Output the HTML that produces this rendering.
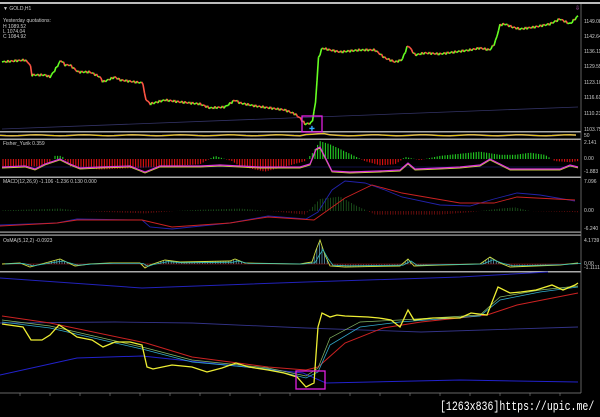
<!DOCTYPE html><html><head><meta charset="utf-8"><style>
html,body{margin:0;padding:0;background:#000;width:600px;height:417px;overflow:hidden}
svg{display:block}
text{font-family:"Liberation Sans",sans-serif;font-size:5px;fill:#ccc}
</style></head><body>
<svg id="s" width="600" height="417" viewBox="0 0 600 417">
<rect width="600" height="417" fill="#000"/>
<rect x="0" y="2" width="600" height="2" fill="#bbb"/>
<g fill="#aaa">
<rect x="0" y="131" width="581" height="1.5"/>
<rect x="0" y="138.5" width="581" height="1.5"/>
<rect x="0" y="176.5" width="581" height="1.5"/>
<rect x="0" y="231.5" width="581" height="1.2"/>
<rect x="0" y="234.5" width="581" height="1.2"/>
<rect x="0" y="271" width="581" height="1.5"/>
</g>
<line x1="581" y1="4" x2="581" y2="393" stroke="#888" stroke-width="0.7"/>
<line x1="0" y1="393" x2="581" y2="393" stroke="#888" stroke-width="0.7"/>
<g id="g"></g>
<text x="3" y="10">▼ GOLD,H1</text>
<text x="3" y="22">Yesterday quotations:</text>
<text x="3" y="28">H 1089.52</text>
<text x="3" y="33">L 1074.04</text>
<text x="3" y="38">C 1084.92</text>
<text x="3" y="145">Fisher_Yurik 0.359</text>
<text x="3" y="183">MACD(12,26,9) -1.106 -1.236 0.130 0.000</text>
<text x="3" y="242">OsMA(5,12,2) -0.0923</text>
<g font-size="4.5">
<text x="584" y="23">1149.08</text><text x="584" y="38">1142.64</text><text x="584" y="53">1136.11</text><text x="584" y="68">1129.55</text><text x="584" y="84">1123.10</text><text x="584" y="99">1116.61</text><text x="584" y="115">1110.23</text><text x="584" y="131">1103.75</text>
<text x="584" y="137">50</text>
<text x="584" y="144">2.141</text><text x="584" y="160">0.00</text><text x="584" y="173">-1.883</text>
<text x="584" y="183">7.096</text><text x="584" y="212">0.00</text><text x="584" y="230">-6.240</text>
<text x="584" y="242">4.1739</text><text x="584" y="265">0.00</text><text x="584" y="269">-1.1111</text>
</g>
<rect x="302" y="116" width="20" height="16" fill="none" stroke="#e020e0" stroke-width="1.3"/>
<rect x="296" y="371" width="29" height="18" fill="none" stroke="#e020e0" stroke-width="1.3"/>
<text x="309" y="131" style="fill:#3af;font-size:7px">✚</text>
<text x="575" y="10" style="fill:#c6c;font-size:6px">⇩</text>
<text x="440" y="410" transform="translate(440 410) scale(1 1.3) translate(-440 -410)" style="fill:#fff;font-family:'Liberation Mono',monospace;font-size:9.9px">[1263x836]https://upic.me/</text>
</svg>
<script>
var g=document.getElementById('g'),h='';
function P(a){var s='';for(var i=0;i<a.length;i+=2)s+=(i?'L':'M')+a[i]+' '+a[i+1];return s}
function L(a,c,w){h+='<path d="'+P(a)+'" fill="none" stroke="'+c+'" stroke-width="'+(w||0.8)+'"/>'}
function I(a,x){for(var i=0;i<a.length-2;i+=2){if(x<=a[i+2]){var t=(x-a[i])/(a[i+2]-a[i]);return a[i+1]+t*(a[i+3]-a[i+1])}}return a[a.length-1]}
var pr=[2,62,25,60,30,64,32,75,45,75,50,77,55,70,61,60,65,65,70,65,78,72,90,72,100,77,103,82,115,77,120,80,135,82,143,83,145,98,150,104,165,100,180,102,200,104,210,108,225,107,235,100,240,103,255,106,270,108,285,110,295,114,300,118,305,124,312,123,316,100,318,60,322,48,330,50,340,52,360,50,375,50,385,58,395,62,402,60,408,45,415,55,425,53,440,54,455,52,470,50,480,48,490,50,495,43,500,25,505,24,512,27,520,29,535,27,550,24,560,19,570,24,578,16];
L([2,129,578,107],'#336',0.8);
var prev=I(pr,2);
for(var x=2;x<578;x+=1.5){var y=I(pr,x+1.5)+Math.sin(x*1.7)*1.3;h+='<line x1="'+x+'" y1="'+prev+'" x2="'+(x+1.5)+'" y2="'+y+'" stroke="'+(y<prev?'#6f2':'#f54')+'" stroke-width="1.6"/>';prev=y}
var yb=[];for(x=0;x<=580;x+=6)yb.push(x,135.3+Math.sin(x*0.13)*0.5+(x>305&&x<325?-1.2:0));L(yb,'#b9a',1.6);L(yb,'#ec0',0.9);
var fa=[2,-7,40,-7,50,-3,55,3,62,3,70,-7,100,-10,150,-8,200,-5,215,3,232,-2,240,-7,265,-12,290,-6,305,-2,312,5,320,17,330,14,350,5,365,-2,380,-6,395,-5,400,-2,405,2,420,-1,440,3,460,5,480,7,500,4,515,4,530,6,545,4,555,-2,570,-3,578,-2];
for(x=3;x<578;x+=2.6){var v=I(fa,x)*1.05;h+='<line x1="'+x+'" y1="159" x2="'+x+'" y2="'+(159-v)+'" stroke="'+(v>0?'#2c2':'#d11')+'" stroke-width="1.1"/>'}
var fl=[2,168,25,167,35,170,45,165,60,160,70,165,80,169,100,168,130,167,140,171,145,173,160,167,200,167,220,166,260,168,300,168,310,165,316,150,320,148,326,160,332,172,350,173,380,172,400,171,408,164,415,170,440,169,460,168,480,166,490,160,500,165,510,170,560,170,570,166,578,168];
L([2,167,578,167],'#228',0.5);
L(fl,'#cc4',0.9);L(fl.map(function(v,i){return i%2?v-1:v}),'#d3d',1.2);
var ma=[2,0.5,60,2,80,0,145,-2,175,0,200,1,240,2,270,0,305,-3,320,10,340,12,355,5,375,-3,440,-3,470,-1,500,2,515,3,530,0,578,-1];
for(x=3;x<578;x+=2.6){v=I(ma,x)*1.2;h+='<line x1="'+x+'" y1="211" x2="'+x+'" y2="'+(211-v)+'" stroke="'+(v>0?'#262':'#811')+'" stroke-width="0.7"/>'}
L([0,225,57,223,77,219,142,220,150,227,172,229,230,223,268,216,306,219,318,212,332,190,345,181,365,183,385,190,402,197,440,205,470,206,494,199,517,193,540,195,575,201],'#22a',0.9);
L([0,226,57,223,77,220,142,220,172,227,230,223,268,217,314,220,345,198,372,185,402,193,460,203,494,203,517,197,575,200],'#c22',0.9);
var oa=[2,264,20,263,30,267,45,263,60,259,75,266,90,264,110,263,140,263,145,268,150,265,165,260,180,262,230,261,235,259,245,263,300,264,312,262,316,250,320,240,325,255,330,266,345,267,400,266,408,259,414,266,440,265,480,264,490,257,500,263,510,267,560,265,578,263];
for(x=10;x<578;x+=2.6){v=I(oa,x);if(Math.abs(v-264)>1.5)h+='<line x1="'+x+'" y1="264" x2="'+x+'" y2="'+v+'" stroke="'+(v<264?'#6ac':'#a33')+'" stroke-width="0.7"/>'}
L([2,264,578,264],'#a22',0.6);
L(oa,'#cd4',0.9);L(oa.map(function(v,i){return i%2?264+(v-264)*0.6:v+3}),'#3bb',0.8);
L([0,278,142,288,306,282,460,277,548,272],'#22b',1);
L([0,323,115,322,192,323,306,328,421,332,578,327],'#338',0.9);
L([0,375,77,358,142,356,303,373,326,383,460,380,578,382],'#22c',1);
var yl=[2,324,23,327,31,340,42,340,50,335,59,325,67,330,77,337,92,340,103,347,115,342,130,342,142,345,147,367,153,369,172,365,192,367,207,372,222,368,236,363,249,367,268,370,284,373,297,377,306,387,314,383,318,327,322,313,330,317,337,315,345,316,368,317,379,318,391,320,400,327,408,310,414,320,433,318,460,318,471,313,487,315,498,287,510,293,521,292,536,290,552,285,563,290,575,285,578,283];
L([2,316,50,323,146,343,192,357,268,367,306,370,318,367,345,343,383,328,421,322,487,315,517,305,578,293],'#c22',1);
L([2,322,50,328,146,350,192,362,268,369,306,378,318,372,330,345,360,327,400,322,480,316,500,300,540,292,578,287],'#3ac',0.8);
L([2,320,50,326,146,348,192,360,268,368,306,376,318,368,330,338,360,322,400,320,480,315,500,297,540,290,578,286],'#8b6',0.7);
L(yl,'#ee3',1.3);
for(x=20;x<580;x+=30)h+='<line x1="'+x+'" y1="393" x2="'+x+'" y2="396" stroke="#888" stroke-width="0.6"/>';
g.innerHTML=h;
</script>
</body></html>
